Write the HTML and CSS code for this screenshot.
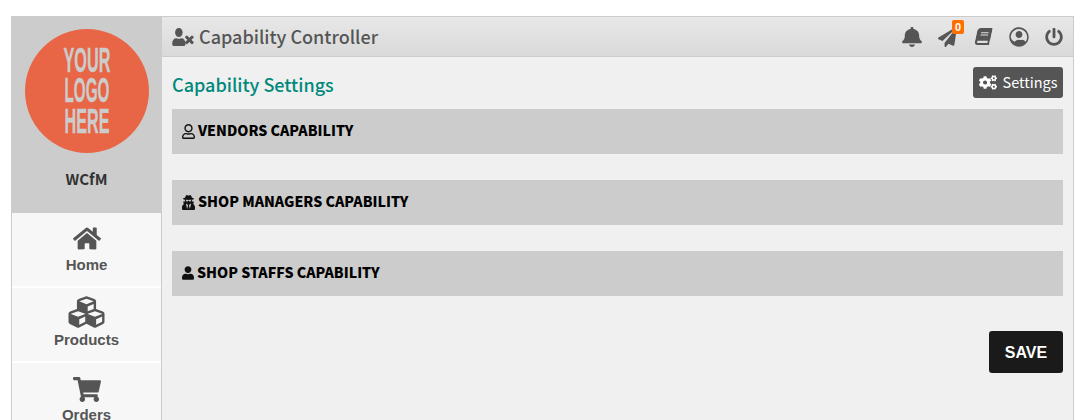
FILE: index.html
```html
<!DOCTYPE html>
<html>
<head>
    <title>Capability Controller</title>
    <link rel="stylesheet" href="styles.css">
</head>
<body>
    <div class="wrapper">
        <div class="sidebar">
            <div class="brand">
                <svg class="logo" viewBox="0 0 124 124">
                    <circle cx="62" cy="62" r="62" fill="#e86646"/>
                    <text transform="translate(62 43) scale(.465 1)">YOUR</text>
                    <text transform="translate(62 73) scale(.437 1)">LOGO</text>
                    <text transform="translate(62 104) scale(.463 1)">HERE</text>
                </svg>
                <div class="brand_name">WCfM</div>
            </div>
            <a class="menu_item">
                <svg class="menu_icon home_icon" viewBox="0 0 576 512"><path d="M280.37 148.26L96 300.11V464a16 16 0 0 0 16 16l112.06-.29a16 16 0 0 0 15.92-16V368a16 16 0 0 1 16-16h64a16 16 0 0 1 16 16v95.64a16 16 0 0 0 16 16.05L464 480a16 16 0 0 0 16-16V300L295.67 148.26a12.19 12.19 0 0 0-15.3 0zM571.6 251.47L488 182.56V44.05a12 12 0 0 0-12-12h-56a12 12 0 0 0-12 12v72.61L318.47 43a48 48 0 0 0-61 0L4.34 251.47a12 12 0 0 0-1.6 16.9l25.5 31A12 12 0 0 0 45.15 301l235.22-193.74a12.19 12.19 0 0 1 15.3 0L530.9 301a12 12 0 0 0 16.9-1.6l25.5-31a12 12 0 0 0-1.7-16.93z"/></svg>
                <span>Home</span>
            </a>
            <a class="menu_item">
                <svg class="menu_icon" viewBox="0 0 512 512"><path d="M488.6 250.2L392 214V105.5c0-15-9.3-28.4-23.4-33.7l-100-37.5c-8.1-3.1-17.1-3.1-25.3 0l-100 37.5c-14.1 5.3-23.4 18.7-23.4 33.7V214l-96.6 36.2C9.3 255.5 0 268.9 0 283.9V394c0 13.6 7.7 26.1 19.9 32.2l100 50c10.1 5.1 22.1 5.1 32.2 0l103.9-52 103.9 52c10.1 5.1 22.1 5.1 32.2 0l100-50c12.2-6.1 19.9-18.6 19.9-32.2V283.9c0-15-9.3-28.4-23.4-33.7zM358 214.8l-85 31.9v-68.2l85-37v73.3zM154 104.1l102-38.2 102 38.2v.6l-102 41.4-102-41.4v-.6zm84 291.1l-85 42.5v-79.1l85-38.8v75.4zm0-112l-102 41.4-102-41.4v-.6l102-38.2 102 38.2v.6zm240 112l-85 42.5v-79.1l85-38.8v75.4zm0-112l-102 41.4-102-41.4v-.6l102-38.2 102 38.2v.6z"/></svg>
                <span>Products</span>
            </a>
            <a class="menu_item">
                <svg class="menu_icon cart_icon" viewBox="0 0 576 512"><path d="M528.12 301.319l47.273-208C578.806 78.301 567.391 64 551.99 64H159.208l-9.166-44.81C147.758 8.021 137.93 0 126.529 0H24C10.745 0 0 10.745 0 24v16c0 13.255 10.745 24 24 24h69.883l70.248 343.435C147.325 417.1 136 435.222 136 456c0 30.928 25.072 56 56 56s56-25.072 56-56c0-15.674-6.447-29.835-16.824-40h209.647C430.447 426.165 424 440.326 424 456c0 30.928 25.072 56 56 56s56-25.072 56-56c0-22.172-12.888-41.332-31.579-50.405l5.517-24.276c3.413-15.018-8.002-29.319-23.403-29.319H218.117l-6.545-32h293.145c11.206 0 20.92-7.754 23.403-18.681z"/></svg>
                <span>Orders</span>
            </a>
        </div>
        <div class="content">
            <div class="top_bar">
                <svg class="title_icon" viewBox="0 0 640 512">
                    <path transform="scale(.84 1)" d="M224 256c70.7 0 128-57.3 128-128S294.7 0 224 0 96 57.3 96 128s57.3 128 128 128zm89.6 32h-16.7c-22.2 10.2-46.9 16-72.9 16s-50.6-5.8-72.9-16h-16.7C60.2 288 0 348.2 0 422.4V464c0 26.5 21.5 48 48 48h352c26.5 0 48-21.5 48-48v-41.6c0-74.2-60.2-134.4-134.4-134.4z"/>
                    <path transform="translate(-220 24) scale(1.3)" d="M589.6 240l45.6-45.6c6.3-6.3 6.3-16.5 0-22.8l-22.8-22.8c-6.3-6.3-16.5-6.3-22.8 0L544 194.4l-45.6-45.6c-6.3-6.3-16.5-6.3-22.8 0l-22.8 22.8c-6.3 6.3-6.3 16.5 0 22.8l45.6 45.6-45.6 45.6c-6.3 6.3-6.3 16.5 0 22.8l22.8 22.8c6.3 6.3 16.5 6.3 22.8 0l45.6-45.6 45.6 45.6c6.3 6.3 16.5 6.3 22.8 0l22.8-22.8c6.3-6.3 6.3-16.5 0-22.8L589.6 240z"/>
                </svg>
                <span class="page_title">Capability Controller</span>
                <div class="top_icons">
                    <svg class="top_icon bell_icon" viewBox="0 0 448 512" preserveAspectRatio="none"><path d="M224 512c35.32 0 63.97-28.65 63.97-64H160.03c0 35.35 28.65 64 63.97 64zm215.39-149.71c-19.32-20.76-55.47-51.99-55.47-154.29 0-77.7-54.48-139.9-127.94-155.16V32c0-17.67-14.32-32-31.98-32s-31.98 14.33-31.98 32v20.84C118.56 68.1 64.08 130.3 64.08 208c0 102.3-36.15 133.53-55.47 154.29-6 6.45-8.66 14.16-8.61 21.71.11 16.4 12.98 32 32.1 32h383.8c19.12 0 32-15.6 32.1-32 .05-7.55-2.61-15.27-8.61-21.71z"/></svg>
                    <div class="notice">
                        <svg class="top_icon plane_icon" viewBox="0 0 512 512" preserveAspectRatio="none"><path d="M476 3.2L12.5 270.6c-18.1 10.4-15.8 35.6 2.2 43.2L121 358.4l287.3-253.2c5.5-4.9 13.3 2.6 8.6 8.3L176 407v80.5c0 23.6 28.5 32.9 42.5 15.8L282 426l124.6 52.2c14.2 6 30.4-2.9 33-18.2l72-432C515 7.8 493.3-6.8 476 3.2z"/></svg>
                        <span class="badge">0</span>
                    </div>
                    <svg class="top_icon book_icon" viewBox="0 0 448 512" preserveAspectRatio="none"><path d="M448 360V24c0-13.3-10.7-24-24-24H96C43 0 0 43 0 96v320c0 53 43 96 96 96h328c13.3 0 24-10.7 24-24v-16c0-7.5-3.5-14.3-8.9-18.7-4.2-15.4-4.2-59.3 0-74.7 5.4-4.3 8.9-11.1 8.9-18.6zM128 134c0-3.3 2.7-6 6-6h212c3.3 0 6 2.7 6 6v20c0 3.3-2.7 6-6 6H134c-3.3 0-6-2.7-6-6v-20zm0 64c0-3.3 2.7-6 6-6h212c3.3 0 6 2.7 6 6v20c0 3.3-2.7 6-6 6H134c-3.3 0-6-2.7-6-6v-20zm253.4 250H96c-17.7 0-32-14.3-32-32 0-17.6 14.4-32 32-32h285.4c-1.9 17.1-1.9 46.9 0 64z"/></svg>
                    <svg class="top_icon circle_icon" viewBox="0 0 496 512"><path d="M248 8C111 8 0 119 0 256s111 248 248 248 248-111 248-248S385 8 248 8zm0 40c114.7 0 208 93.3 208 208 0 45-14.4 86.7-38.8 120.8-22.8-32.4-57.2-52.8-91.2-52.8-2.4 0-4.8.4-7.1 1.1-13 4.2-26.6 6.9-40.9 6.9-14.3 0-28-2.7-40.9-6.9-2.3-.7-4.7-1.1-7.1-1.1-34 0-68.4 20.4-91.2 52.8C64.4 342.7 40 301 40 256 40 141.3 133.3 48 248 48zm0 56c48.6 0 88 39.4 88 88s-39.4 88-88 88-88-39.4-88-88 39.4-88 88-88z"/></svg>
                    <svg class="top_icon power_icon" viewBox="0 0 512 512"><path d="M400 54.1c63 45 104 118.6 104 201.9 0 136.8-110.8 247.7-247.5 248C120 504.3 8.2 393 8 256.4 7.9 173.1 48.9 99.3 111.8 54.2c11.7-8.3 28-4.8 35 7.7L162.6 90c5.9 10.5 3.1 23.8-6.6 31-41.5 30.8-68 79.6-68 134.9-.1 92.3 74.5 168.1 168 168.1 91.6 0 168.6-74.2 168-169.1-.3-51.8-24.7-101.8-68.1-134-9.7-7.2-12.4-20.5-6.4-30.9l15.8-28.1c7-12.4 23.2-16.1 34.8-7.8zM296 264V24c0-13.3-10.7-24-24-24h-32c-13.3 0-24 10.7-24 24v240c0 13.3 10.7 24 24 24h32c13.3 0 24-10.7 24-24z"/></svg>
                </div>
            </div>
            <div class="main">
                <div class="main_head">
                    <h2>Capability Settings</h2>
                    <a class="settings_btn">
                        <svg class="cogs_icon" viewBox="0 0 640 512"><path d="M512.1 191l-8.2 14.3c-3 5.3-9.4 7.5-15.1 5.4-11.8-4.4-22.6-10.7-32.1-18.6-4.6-3.8-5.8-10.5-2.8-15.7l8.2-14.3c-6.9-8-12.3-17.3-15.9-27.4h-16.5c-6 0-11.2-4.3-12.2-10.3-2-12-2.1-24.6 0-37.1 1-6 6.2-10.4 12.2-10.4h16.5c3.6-10.1 9-19.4 15.9-27.4l-8.2-14.3c-3-5.2-1.9-11.9 2.8-15.7 9.5-7.9 20.4-14.2 32.1-18.6 5.7-2.1 12.1.1 15.1 5.4l8.2 14.3c10.5-1.9 21.2-1.9 31.7 0L552 6.3c3-5.3 9.4-7.5 15.1-5.4 11.8 4.4 22.6 10.7 32.1 18.6 4.6 3.8 5.8 10.5 2.8 15.7l-8.2 14.3c6.9 8 12.3 17.3 15.9 27.4h16.5c6 0 11.2 4.3 12.2 10.3 2 12 2.1 24.6 0 37.1-1 6-6.2 10.4-12.2 10.4h-16.5c-3.6 10.1-9 19.4-15.9 27.4l8.2 14.3c3 5.2 1.9 11.9-2.8 15.7-9.5 7.9-20.4 14.2-32.1 18.6-5.7 2.1-12.1-.1-15.1-5.4l-8.2-14.3c-10.4 1.9-21.2 1.9-31.7 0zm-10.5-58.8c38.5 29.6 82.4-14.3 52.8-52.8-38.5-29.7-82.4 14.3-52.8 52.8zM386.3 286.1l33.7 16.8c10.1 5.8 14.5 18.1 10.5 29.1-8.9 24.2-26.4 46.4-42.6 65.8-7.4 8.9-20.2 11.1-30.3 5.3l-29.1-16.8c-16 13.7-34.6 24.6-54.9 31.7v33.6c0 11.6-8.3 21.6-19.7 23.6-24.6 4.2-50.4 4.4-75.9 0-11.5-2-20-11.9-20-23.6V418c-20.3-7.2-38.9-18-54.9-31.7L74 403c-10 5.8-22.9 3.6-30.3-5.3-16.2-19.4-33.3-41.6-42.2-65.7-4-10.9.4-23.2 10.5-29.1l33.3-16.8c-3.9-20.9-3.9-42.4 0-63.4L12 205.8c-10.1-5.8-14.6-18.1-10.5-29 8.9-24.2 26-46.4 42.2-65.8 7.4-8.9 20.2-11.1 30.3-5.3l29.1 16.8c16-13.7 34.6-24.6 54.9-31.7V57.1c0-11.5 8.2-21.5 19.6-23.5 24.6-4.2 50.5-4.4 76-.1 11.5 2 20 11.9 20 23.6v33.6c20.3 7.2 38.9 18 54.9 31.7l29.1-16.8c10-5.8 22.9-3.6 30.3 5.3 16.2 19.4 33.2 41.6 42.1 65.8 4 10.9.1 23.2-10 29.1l-33.7 16.8c3.9 21 3.9 42.5 0 63.5zm-117.6 21.1c59.2-77-28.7-164.9-105.7-105.7-59.2 77 28.7 164.9 105.7 105.7zm243.4 182.7l-8.2 14.3c-3 5.3-9.4 7.5-15.1 5.4-11.8-4.4-22.6-10.7-32.1-18.6-4.6-3.8-5.8-10.5-2.8-15.7l8.2-14.3c-6.9-8-12.3-17.3-15.9-27.4h-16.5c-6 0-11.2-4.3-12.2-10.3-2-12-2.1-24.6 0-37.1 1-6 6.2-10.4 12.2-10.4h16.5c3.6-10.1 9-19.4 15.9-27.4l-8.2-14.3c-3-5.2-1.9-11.9 2.8-15.7 9.5-7.9 20.4-14.2 32.1-18.6 5.7-2.1 12.1.1 15.1 5.4l8.2 14.3c10.5-1.9 21.2-1.9 31.7 0l8.2-14.3c3-5.3 9.4-7.5 15.1-5.4 11.8 4.4 22.6 10.7 32.1 18.6 4.6 3.8 5.8 10.5 2.8 15.7l-8.2 14.3c6.9 8 12.3 17.3 15.9 27.4h16.5c6 0 11.2 4.3 12.2 10.3 2 12 2.1 24.6 0 37.1-1 6-6.2 10.4-12.2 10.4h-16.5c-3.6 10.1-9 19.4-15.9 27.4l8.2 14.3c3 5.2 1.9 11.9-2.8 15.7-9.5 7.9-20.4 14.2-32.1 18.6-5.7 2.1-12.1-.1-15.1-5.4l-8.2-14.3c-10.4 1.9-21.2 1.9-31.7 0zM501.6 431c38.5 29.6 82.4-14.3 52.8-52.8-38.5-29.6-82.4 14.3-52.8 52.8z"/></svg>
                        <span>Settings</span>
                    </a>
                </div>
                <div class="cap_head">
                    <svg class="cap_icon" viewBox="0 0 448 512"><path d="M313.6 304c-28.7 0-42.5 16-89.6 16-47.1 0-60.8-16-89.6-16C60.2 304 0 364.2 0 438.4V464c0 26.5 21.5 48 48 48h352c26.5 0 48-21.5 48-48v-25.6c0-74.2-60.2-134.4-134.4-134.4zM400 464H48v-25.6c0-47.6 38.8-86.4 86.4-86.4 14.6 0 38.3 16 89.6 16 51.7 0 74.9-16 89.6-16 47.6 0 86.4 38.8 86.4 86.4V464zM224 288c79.5 0 144-64.5 144-144S303.5 0 224 0 80 64.5 80 144s64.5 144 144 144zm0-240c52.9 0 96 43.1 96 96s-43.1 96-96 96-96-43.1-96-96 43.1-96 96-96z"/></svg>
                    <span>VENDORS CAPABILITY</span>
                </div>
                <div class="cap_head">
                    <svg class="cap_icon" viewBox="0 0 448 512"><path d="M383.9 308.3l23.9-62.6c4-10.5-3.7-21.7-15-21.7h-58.5c11-18.9 17.8-40.6 17.8-64v-.3c39.2-7.8 64-19.1 64-31.7 0-13.3-27.3-25.1-70.1-33-9.2-32.8-27-65.8-40.6-82.8-9.5-11.9-25.9-15.6-39.5-8.8l-27.6 13.8c-9 4.5-19.6 4.5-28.6 0L182.1 3.4c-13.6-6.8-30-3.1-39.5 8.8-13.5 17-31.4 50-40.6 82.8-42.7 7.9-70 19.7-70 33 0 12.6 24.8 23.9 64 31.7v.3c0 23.4 6.8 45.1 17.8 64H56.3c-11.5 0-19.2 11.7-14.7 22.3l25.8 60.2C27.3 329.8 0 372.7 0 422.4v44.8C0 491.9 20.1 512 44.8 512h358.4c24.7 0 44.8-20.1 44.8-44.8v-44.8c0-48.4-25.8-90.4-64.1-114.1zM176 480l-41.6-192 49.6 32 24 40-32 120zm96 0l-32-120 24-40 49.6-32L272 480zm41.7-298.5c-3.9 11.9-7 24.6-16.5 33.4-10.1 9.3-48 22.4-64-25-2.8-8.4-15.4-8.4-18.3 0-17 50.2-56 32.4-64 25-9.5-8.8-12.7-21.5-16.5-33.4-.8-2.5-6.3-5.7-6.3-5.8v-10.8c28.3 3.6 61 5.8 96 5.8s67.7-2.1 96-5.8v10.8c-.1.1-5.6 3.2-6.4 5.8z"/></svg>
                    <span>SHOP MANAGERS CAPABILITY</span>
                </div>
                <div class="cap_head">
                    <svg class="cap_icon staff_icon" viewBox="0 0 448 512"><path d="M224 256c70.7 0 128-57.3 128-128S294.7 0 224 0 96 57.3 96 128s57.3 128 128 128zm89.6 32h-16.7c-22.2 10.2-46.9 16-72.9 16s-50.6-5.8-72.9-16h-16.7C60.2 288 0 348.2 0 422.4V464c0 26.5 21.5 48 48 48h352c26.5 0 48-21.5 48-48v-41.6c0-74.2-60.2-134.4-134.4-134.4z"/></svg>
                    <span>SHOP STAFFS CAPABILITY</span>
                </div>
                <div class="save_row">
                    <button class="save_btn">SAVE</button>
                </div>
            </div>
        </div>
    </div>
</body>
</html>
```

FILE: styles.css
```css
html, body {
    height: 420px;
    overflow: hidden;
}

body {
    margin: 0;
    padding: 16px 13px 0 11px;
    box-sizing: border-box;
    background-color: #fff;
    font-family: "Noto Sans CJK SC", "Source Sans Pro", sans-serif;
}

.wrapper {
    display: flex;
    height: 404px;
    overflow: hidden;
    background-color: #f0f0f0;
    border-top: 1px solid #ccc;
    border-right: 1px solid #ccc;
}

/* sidebar */
.sidebar {
    width: 151px;
    flex-shrink: 0;
    margin-top: -1px;
    background-color: #f7f7f7;
    border-left: 1px solid #ccc;
    border-right: 1px solid #ccc;
    box-sizing: border-box;
}

.brand {
    height: 197px;
    margin-left: -1px;
    margin-right: -1px;
    background-color: #ccc;
    text-align: center;
}

.logo {
    display: block;
    width: 124px;
    height: 124px;
    margin: 0 auto;
    padding-top: 13px;
}

.logo text {
    font-family: "Liberation Sans", sans-serif;
    font-size: 35px;
    font-weight: bold;
    fill: #ccc;
    stroke: #ccc;
    stroke-width: 0.4px;
    text-anchor: middle;
}

.brand_name {
    margin-top: 16px;
    font-size: 15px;
    font-weight: 700;
    line-height: 20px;
    color: #333;
}

.menu_item {
    display: flex;
    flex-direction: column;
    align-items: center;
    height: 73px;
    border-bottom: 2px solid #fff;
    color: #555;
    font-family: "Liberation Sans", sans-serif;
    font-size: 15px;
    font-weight: bold;
    line-height: 18px;
    text-align: center;
}

.menu_icon {
    width: 37px;
    height: 36px;
    margin-top: 6px;
    margin-bottom: 1px;
    fill: #555;
}

.home_icon {
    width: 28px;
    height: 25px;
    margin-top: 13px;
    margin-bottom: 5px;
}

.cart_icon {
    width: 28px;
    height: 25px;
    margin-top: 14px;
    margin-bottom: 4px;
}

/* top bar */
.content {
    flex: 1;
    display: flex;
    flex-direction: column;
    min-width: 0;
}

.top_bar {
    display: flex;
    align-items: center;
    height: 39px;
    flex-shrink: 0;
    padding: 0 10px;
    background: linear-gradient(#e8e8e8, #d9d9d9);
    border-bottom: 1px solid #ccc;
}

.title_icon {
    width: 23px;
    height: 18px;
    margin-right: 4px;
    fill: #555;
}

.page_title {
    margin-top: -2px;
    font-size: 18px;
    font-weight: 500;
    color: #555;
}

.top_icons {
    display: flex;
    align-items: center;
    gap: 16px;
    margin-left: auto;
}

.top_icon {
    display: block;
    height: 20px;
    fill: #555;
}

.bell_icon {
    width: 20px;
}

.plane_icon {
    width: 19px;
    margin-right: 1px;
}

.book_icon {
    width: 15px;
    height: 17px;
    margin: 0 2px;
    transform: skewX(-12deg);
}

.circle_icon {
    width: 20px;
}

.power_icon {
    width: 18px;
    height: 18px;
}

.notice {
    position: relative;
}

.badge {
    position: absolute;
    top: -7px;
    right: -6px;
    width: 12px;
    height: 14px;
    background-color: #ff6f00;
    border-radius: 2px;
    color: #fff;
    font-family: "Liberation Sans", sans-serif;
    font-size: 11px;
    font-weight: bold;
    line-height: 14px;
    text-align: center;
}

/* main panel */
.main {
    padding: 10px 10px 0;
}

.main_head {
    display: flex;
    align-items: center;
    justify-content: space-between;
    height: 31px;
    margin-bottom: 11px;
}

h2 {
    margin: 2px 0 0;
    font-size: 18px;
    font-weight: 500;
    color: #00897b;
}

.settings_btn {
    display: flex;
    align-items: center;
    justify-content: center;
    gap: 6px;
    width: 90px;
    height: 31px;
    background-color: #555;
    border-radius: 3px;
    color: #fff;
    font-size: 14.5px;
}

.settings_btn span {
    margin-top: -2px;
}

.cogs_icon {
    width: 18px;
    height: 15px;
    fill: #fff;
}

.cap_head {
    display: flex;
    align-items: center;
    gap: 3px;
    height: 45px;
    margin-bottom: 26px;
    padding-left: 10px;
    background-color: #ccc;
    color: #000;
    font-size: 14.2px;
    font-weight: 900;
}

.cap_head span {
    margin-top: -3px;
}

.cap_icon {
    width: 13px;
    height: 15px;
    margin-top: -1px;
    fill: #111;
}

.cap_icon.staff_icon {
    width: 12px;
    height: 14px;
}

.save_row {
    display: flex;
    justify-content: flex-end;
    margin-top: 35px;
}

.save_btn {
    width: 74px;
    height: 42px;
    padding: 1px 0 0;
    background-color: #1a1a1a;
    border: none;
    border-radius: 3px;
    color: #fff;
    font-family: "Liberation Sans", sans-serif;
    font-size: 16px;
    font-weight: bold;
    cursor: pointer;
}
```
